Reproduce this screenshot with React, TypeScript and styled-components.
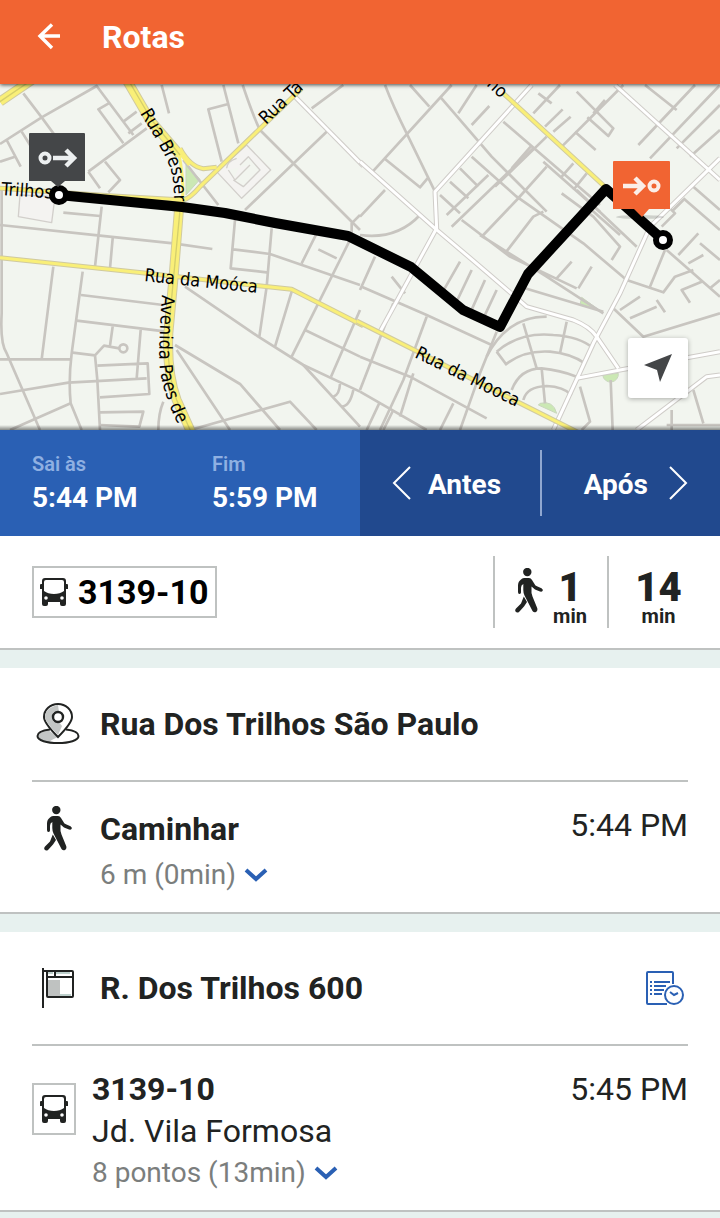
import React from "react";
import styled, { createGlobalStyle } from "styled-components";

const GlobalStyle = createGlobalStyle`
  *, *::before, *::after { box-sizing: border-box; }
  body {
    margin: 0;
    background: #e7f1ef;
    color: #212322;
    font-family: Roboto, "Liberation Sans", sans-serif;
  }
  button { font: inherit; color: inherit; background: none; border: 0; padding: 0; cursor: pointer; }
  h1, h2, h3, p, dl, dt, dd { margin: 0; font-weight: inherit; font-size: inherit; }
  svg { display: block; flex: none; }
`;

const Header = styled.header`
  position: relative;
  z-index: 1;
  display: flex;
  align-items: center;
  gap: 36px;
  height: 84px;
  padding: 0 32px 10px;
  background: #f16432;
  color: #fff;
  box-shadow: 0 1px 4px rgba(0, 0, 0, 0.7);
`;

const BackLink = styled.a`
  display: flex;
  justify-content: center;
  width: 34px;
  color: inherit;
`;

const PageTitle = styled.h1`
  font-size: 32px;
  line-height: 40px;
  font-weight: 700;
`;

const MapArea = styled.section`
  position: relative;
  height: 346px;
  overflow: hidden;
  background: #f2f5ef;
  &::after {
    content: "";
    position: absolute;
    inset: auto 0 0;
    height: 5px;
    background: linear-gradient(transparent, rgba(0, 0, 0, 0.45));
    pointer-events: none;
  }
`;

const MapCanvas = styled.svg`
  width: 100%;
  height: 100%;
`;

const Streets = styled.g`
  fill: none;
  stroke-linejoin: round;
  .minor { stroke: #c8c5c0; stroke-width: 8; }
  .plot { stroke: #d2cfcb; stroke-width: 4; fill: #f4f3f1; }
  .park { fill: #cbe8b4; stroke: #c9d6bd; stroke-width: 3; }
  .case { stroke: #cfccc8; stroke-width: 15; }
  .white { stroke: #fff; stroke-width: 9; }
  .gold { stroke: #d0caa0; stroke-width: 15; }
  .yellow { stroke: #f9ef78; stroke-width: 9; }
  .goldWide { stroke: #d0caa0; stroke-width: 30; }
  .yellowWide { stroke: #f9ef78; stroke-width: 24; }
  .median { stroke: #d5cf6c; stroke-width: 4; }
`;

const StreetNames = styled.g`
  font-family: "DejaVu Sans Condensed", "DejaVu Sans", sans-serif;
  font-size: 18px;
  fill: #000;
`;

const LocateButton = styled.button`
  position: absolute;
  right: 32px;
  bottom: 32px;
  z-index: 1;
  display: grid;
  place-items: center;
  width: 60px;
  height: 60px;
  border-radius: 3px;
  background: #fff;
  box-shadow: 0 1px 5px rgba(0, 0, 0, 0.3);
`;

const ScheduleBar = styled.section`
  display: grid;
  grid-template-columns: 1fr 1fr;
  height: 106px;
  color: #fff;
  font-weight: 700;
`;

const Times = styled.dl`
  display: grid;
  grid-template-columns: 1fr 1fr;
  align-items: center;
  padding-top: 4px;
  background: #2a60b4;
`;

const TimeEntry = styled.div`
  padding-left: 32px;
  dt { font-size: 20px; line-height: 26px; font-weight: 600; color: #8fb0e2; }
  dd { font-size: 28px; line-height: 42px; }
`;

const Shifts = styled.div`
  display: grid;
  grid-template-columns: 1fr 1fr;
  padding: 20px 0;
  background: #21498e;
`;

const ShiftButton = styled.button<{ $end?: boolean }>`
  display: flex;
  align-items: center;
  justify-content: ${(p) => (p.$end ? "flex-end" : "flex-start")};
  gap: ${(p) => (p.$end ? "20px" : "16px")};
  padding: 0 32px;
  font-size: 28px;
  line-height: 32px;
  border-left: ${(p) => (p.$end ? "2px solid #90a7d0" : "0")};
  span { padding-top: 4px; }
`;

const Card = styled.section`
  margin-bottom: 18px;
  padding: 0 32px;
  background: #fff;
  border-bottom: 2px solid #bfc2c1;
`;

const Summary = styled(Card)`
  display: flex;
  align-items: center;
  justify-content: space-between;
  height: 114px;
  padding-right: 0;
`;

const LineBadge = styled.div`
  display: flex;
  align-items: center;
  gap: 10px;
  height: 52px;
  padding: 0 7px 0 6px;
  border: 2px solid #bfc2c1;
  color: #000;
  font-size: 34px;
  line-height: 40px;
  font-weight: 700;
`;

const Stats = styled.div`
  display: grid;
  grid-template-columns: 114px 113px;
`;

const Stat = styled.div<{ $last?: boolean }>`
  display: flex;
  justify-content: center;
  gap: 10px;
  height: 72px;
  padding: 12px ${(p) => (p.$last ? "12px" : "0")} 0 0;
  border-left: 2px solid #bfc2c1;
`;

const Minutes = styled.p`
  display: flex;
  flex-direction: column;
  align-items: center;
  font-size: 20px;
  line-height: 18px;
  font-weight: 700;
  strong { font-size: 40px; line-height: 39px; }
`;

const StopHeader = styled.header`
  display: flex;
  align-items: center;
  gap: 16px;
  height: 114px;
  border-bottom: 2px solid #bfc2c1;
`;

const StopTitle = styled.h2`
  flex: 1;
  font-size: 32px;
  line-height: 40px;
  font-weight: 700;
`;

const IconSlot = styled.div`
  display: flex;
  justify-content: center;
  width: 52px;
`;

const TimetableButton = styled.button`
  padding: 4px;
`;

const Step = styled.div<{ $top: number }>`
  display: flex;
  align-items: flex-start;
  gap: 16px;
  padding: ${(p) => p.$top}px 0 14px;
`;

const StepBody = styled.div`
  flex: 1;
`;

const StepName = styled.h3`
  font-size: 32px;
  line-height: 46px;
  font-weight: 700;
`;

const Destination = styled.p`
  font-size: 32px;
  line-height: 38px;
`;

const Details = styled.button`
  display: flex;
  align-items: center;
  gap: 8px;
  color: #7b7e7d;
  font-size: 28px;
  line-height: 46px;
`;

const StepTime = styled.time<{ $line: number }>`
  font-size: 32px;
  line-height: ${(p) => p.$line}px;
`;

const BusBox = styled.div`
  display: grid;
  place-items: center;
  width: 44px;
  height: 52px;
  margin-top: 17px;
  border: 2px solid #bfc2c1;
`;

const BusIcon = () => (
  <svg width="28" height="28" viewBox="0 0 28 28" aria-hidden="true">
    <path fill="#212322" fillRule="evenodd" d="M5 0H23Q26 0 26 3V6H27Q28 6 28 7V11H26V26Q26 28 24 28H22Q20 28 20 26V24H8V26Q8 28 6 28H4Q2 28 2 26V11H0V7Q0 6 1 6H2V3Q2 0 5 0ZM6 2Q4 2 4 4V13Q8 16 14 16T24 13V4Q24 2 22 2ZM6 18.200A1.800 1.800 0 1 0 6 21.800A1.800 1.800 0 1 0 6 18.200ZM22 18.200A1.800 1.800 0 1 0 22 21.800A1.800 1.800 0 1 0 22 18.200Z" />
  </svg>
);

const WalkIcon = () => (
  <svg width="28" height="45" viewBox="0 0 28 45" aria-hidden="true">
    <circle cx="12.300" cy="4" r="4.200" fill="#212322" />
    <path fill="#212322" d="M9 10H14Q16 10 17 12L19.500 16Q20 17.500 22.500 18.500L26.500 20.200Q28.500 21.500 27.500 23Q26.800 24 25 23.500L20 21.500L16.500 18.500V25L17.500 28.500L22.200 40Q23 43 21 44Q19 45 17.500 43L9.500 27.500Q8.300 25 8.300 22V16Q6 17 6 20V24.500Q5.700 26 4.400 26Q3 26 3 24V17.500Q3 13.500 6 11.500Q7 10 9 10ZM8.800 28.500L12 34L9 38.500L4 44Q2 45.300 .500 43.500Q-.300 42 1 40.500L6 35.500Z" />
  </svg>
);

const PinIcon = () => (
  <svg width="44" height="42" viewBox="0 0 44 42" aria-hidden="true">
    <ellipse cx="22" cy="33" rx="20.5" ry="7" fill="#fff" />
    <path d="M22 34L12 27Q2 29 2 33Q3 38 13 39Q15 37 22 34Z" fill="#c3c6c5" />
    <path d="M14 26.500Q1.500 28 1.500 33C1.500 37.500 11 40 22 40S42.500 37.500 42.500 33Q42.500 28 30 26.500" fill="none" stroke="#212322" strokeWidth="2" />
    <path d="M22 34Q8 20 8 14A14 13 0 0 1 36 14Q36 20 22 34Z" fill="#fff" stroke="#212322" strokeWidth="2" />
    <path d="M22 32Q9 19 9 14Q9 5 22 2L23 9H17V19H23L26 23Z" fill="#c3c6c5" />
    <circle cx="22" cy="14" r="5" fill="#fff" stroke="#212322" strokeWidth="2.400" />
  </svg>
);

const StopIcon = () => (
  <svg width="32" height="40" viewBox="0 0 32 40" fill="none" aria-hidden="true">
    <path d="M6 12H18V28H6Z" fill="#bfc2c1" />
    <path d="M18 26H29V28H18ZM14 4H28V6H14ZM6 4H11V6H6Z" fill="#bdd0cc" />
    <path d="M1 0V40M1 3H30Q31 3 31 4V28Q31 29 30 29H6Q5 29 5 28V3M5 9H31M13 3V9" stroke="#212322" strokeWidth="2" />
  </svg>
);

const TimetableIcon = () => (
  <svg width="38" height="34" viewBox="0 0 38 34" fill="none" stroke="#2a60b4" aria-hidden="true">
    <path d="M27 13V2Q27 1 26 1H2Q1 1 1 2V32Q1 33 2 33H21M4 11H6M8 11H24M4 15H6M8 15H20M4 19H6M8 19H18M4 23H6M8 23H16" strokeWidth="2" />
    <circle cx="28" cy="24" r="9" strokeWidth="2" />
    <path d="M24 21L28 24L32 22" strokeWidth="2" />
  </svg>
);

const ChevronDown = () => (
  <svg width="24" height="16" viewBox="0 0 24 16" fill="none" stroke="#2a60b4" strokeWidth="4" aria-hidden="true">
    <path d="M2 3L12 12L22 3" />
  </svg>
);

const ThinChevron = ({ right }: { right?: boolean }) => (
  <svg width="20" height="34" viewBox="0 0 20 34" fill="none" stroke="#fff" strokeWidth="2" aria-hidden="true">
    <path d={right ? "M2 1L18 17L2 33" : "M18 1L2 17L18 33"} />
  </svg>
);

const minorWest = [
  "M0 192L125 112L290 18L400 165M70 40L125 112L215 235M330 68L295 88L370 190M370 125L410 95M385 160L425 130",
  "M265 275L440 145M265 275L300 325M315 245L360 300L325 337M0 245L45 230M20 180L62 260M65 155L90 195",
  "M485 15L507 100M670 15L715 190M685 72L625 88L665 245M935 85L1030 15M980 155L735 390M780 150L1080 450",
  "M550 240L655 375M190 398L300 408M305 380L285 560M0 435L300 467L520 490L637 507M338 475L330 565",
  "M5 330V700Q0 790 20 820L120 1050M160 560L125 838M0 838H212M248 575L215 820Q205 900 212 970L245 1050",
  "M243 645L490 675M230 722L500 755M338 740L330 797M218 818L285 826L312 797L358 805M285 826L292 900L300 1050",
  "M292 857L443 850L448 942L300 952M422 750L410 895M0 942L205 908L440 895M300 997L430 995L418 1040L300 1035M30 1050L212 970",
  "M555 620L775 770L910 855L1080 935M525 795L720 912L840 1050M530 810L690 1050M570 1050L870 965L950 1050M475 1050Q475 1000 490 965",
  "M705 420L692 565L800 577M700 508L810 522L1080 615M815 445L800 620L778 770M950 460L905 550M955 508L1010 535",
  "M1080 405L1055 430V470L875 830M875 635L825 800M915 750L1080 830M1080 690L993 890M910 855L1080 1040M1020 912Q1018 945 1000 950M1060 930Q1050 978 1025 980M728 15Q760 110 780 150",
];

const minorEast = [
  "M75 15Q100 80 140 160L225 335M150 15L208 80M275 15L38 275M240 50L395 230L560 395M75 237L180 322L205 292",
  "M350 15L295 100M335 135L388 78M430 125L505 190L720 375M455 265L512 200M405 320L560 170M535 40L575 70M600 15L520 100M555 140L608 88M580 155L632 110M600 205L745 60L790 15",
  "M650 35L760 145L745 168L682 112M645 155L707 210M735 60L700 100M855 15L950 90M1005 15L835 195M1080 15L870 235M1080 75L950 205M1080 150L990 230M605 290L640 250M640 330L680 280M550 245L720 395",
  "M335 230L470 350L670 490L800 600M300 265L355 320M270 305L325 355M240 345L300 400M275 440L520 205M260 405L385 285M370 465L470 360L560 260M435 520L520 410L550 395M360 465L560 590L730 700M305 420L450 530L650 625",
  "M605 340L700 410L780 500L755 540M650 330L830 500M590 595L635 545M655 625L695 560M695 390L780 465M480 620L730 695M0 465Q110 480 180 405M0 410L75 330",
  "M5 620L200 705L395 795M45 530L0 630M135 640L95 590M300 545L240 650M335 570L285 675M375 600L330 700M410 630L370 715M200 710L130 900L60 1050M100 670L35 840L0 930M410 755L360 880L300 1050",
  "M0 830L150 890L380 1015M0 935L200 1050M60 965L20 1050M100 990L70 1050M280 970L240 1050M160 880L120 1010",
  "M410 815Q480 755 580 765Q660 770 700 805M435 855Q490 810 570 815Q630 820 675 850M380 830Q440 710 560 710M490 960Q500 920 560 918Q610 920 635 945M455 930Q480 865 545 865Q600 870 650 890M490 730L530 865M620 725L600 820M410 815L440 855M545 865L555 970M660 920L690 1025L665 1050",
  "M800 600L910 637L945 590L1000 570M870 620L915 510M920 510L1080 650M955 525L1015 460M1020 490L1080 540M970 355L1080 450M1000 320L1080 390M940 390L970 360M905 440L945 400L920 375M985 550L1030 525M1025 605L965 630L990 668M755 680L850 770L1080 700M780 690L840 650M810 715L890 680M890 660L915 697",
  "M752 900L758 1050M935 990V1050M1000 930L1030 1030M920 1035H1080M1080 600L1050 625",
];

const whiteEast = [
  "M515 15L225 335L230 445L60 755",
  "M0 245L225 445Q350 550 500 680L640 720Q690 740 710 770L775 865",
  "M765 15L1080 300",
  "M1080 235L870 440L780 640L700 790L580 1050",
  "M650 895L780 870L1080 815",
  "M830 1050L1040 890L1080 885",
];

const yellowWest = [
  "M905 25L600 320Q570 355 550 360L340 348L0 325",
  "M540 205Q570 260 610 266L650 262",
  "M0 533L440 580L875 628L1090 737",
];

const RouteMap = () => (
  <MapCanvas viewBox="0 84 720 346" preserveAspectRatio="xMidYMid slice" role="img" aria-label="Mapa da rota">
    <Streets transform="translate(0 80) scale(.33333)">
      <path className="plot" d="M60 345L55 410L155 428L165 350Z" />
      <path className="plot" d="M740 195L812 270L725 355L650 275ZM680 265Q680 245 710 235M685 270L705 300L750 255M700 300L730 320L780 270L745 230L720 255" />
      <path className="park" d="M558 255L600 298L558 345Z" />
      {minorWest.map((d) => <path key={d} className="minor" d={d} />)}
      <circle className="minor" cx="370" cy="805" r="12" />
      <path className="case" d="M880 45L1090 258" />
      <path className="white" d="M880 45L1090 258" />
      {yellowWest.map((d) => <path key={d} className="gold" d={d} />)}
      <path className="goldWide" d="M0 65L95 0M380 0L450 120L540 225" />
      <path className="goldWide" d="M540 350L520 600L505 760Q500 880 530 960L575 1060" />
      {yellowWest.map((d) => <path key={d} className="yellow" d={d} />)}
      <path className="yellowWide" d="M0 65L95 0M380 0L450 120L540 225" />
      <path className="yellow" d="M535 215L568 255M535 215Q552 290 548 360" />
      <path className="yellowWide" d="M540 350L520 600L505 760Q500 880 530 960L575 1060" />
      <path className="median" d="M0 65L95 0M385 0L455 120L540 225M540 390L520 600L505 760Q500 880 530 960L575 1060" />
    </Streets>
    <Streets transform="translate(360 80) scale(.33333)">
      <path className="park" d="M665 652L720 692L660 675ZM540 970Q580 960 590 1000L535 975ZM728 885A22 22 0 1 0 775 880Z" />
      {minorEast.map((d) => <path key={d} className="minor" d={d} />)}
      {whiteEast.map((d) => <path key={d} className="case" d={d} />)}
      {whiteEast.map((d) => <path key={d} className="white" d={d} />)}
      <path className="gold" d="M430 40L740 325M-10 723L660 1060" />
      <path className="yellow" d="M430 40L740 325M-10 723L660 1060" />
    </Streets>
    <defs>
      <path id="bresser" d="M140 113Q161 146 170 167Q175 180 174 215" />
      <path id="paes" d="M162 295Q158 350 160 370Q164 400 186 440" />
    </defs>
    <StreetNames>
      <text transform="translate(1 195) rotate(4)">Trilhos</text>
      <text><textPath href="#bresser">Rua Bresser</textPath></text>
      <text><textPath href="#paes">Avenida Paes de</textPath></text>
      <text transform="translate(144 281) rotate(6)">Rua da Moóca</text>
      <text transform="translate(266 125) rotate(-44)">Rua Ta</text>
      <text transform="translate(414 357) rotate(26)">Rua da Mooca</text>
      <text transform="translate(486 85) rotate(43)">no</text>
    </StreetNames>
    <path d="M59 195L182 207L225 213L275 223L348 236L411 267L463 310L500 327L528 274L606 189L663 240" fill="none" stroke="#000" strokeWidth="10" strokeLinejoin="round" />
    <circle cx="59" cy="195" r="7" fill="#fff" stroke="#000" strokeWidth="6" />
    <circle cx="663" cy="240" r="7" fill="#fff" stroke="#000" strokeWidth="6" />
    <path d="M30 133H84Q85 133 85 134V181H65L58 187L51 181H29V134Q29 133 30 133Z" fill="#444648" />
    <g fill="none" stroke="#eceff0" strokeWidth="4.500">
      <circle cx="45" cy="158" r="4.500" strokeWidth="4" />
      <path d="M53 158H74M66 150L74 158L66 166" />
    </g>
    <ellipse cx="640" cy="217" rx="24" ry="2" fill="#000" opacity=".15" />
    <path d="M614 161H669Q670 161 670 162V209H649L642 217L634 209H613V162Q613 161 614 161Z" fill="#f16432" />
    <g fill="none" stroke="#fbeee8" strokeWidth="4.500">
      <circle cx="654" cy="186" r="4.500" strokeWidth="4" />
      <path d="M623 186H643M635 178L643 186L635 194" />
    </g>
  </MapCanvas>
);

export default function App() {
  return (
    <>
      <GlobalStyle />
      <Header>
        <BackLink href="#" aria-label="Voltar">
          <svg width="24" height="28" viewBox="0 0 24 28" fill="none" stroke="#fff" strokeWidth="3.400" aria-hidden="true">
            <path d="M15 1.500L3 13L15 25M3 13H23" />
          </svg>
        </BackLink>
        <PageTitle>Rotas</PageTitle>
      </Header>
      <main>
        <MapArea>
          <RouteMap />
          <LocateButton aria-label="Minha localização">
            <svg width="30" height="30" viewBox="0 0 30 30" aria-hidden="true">
              <path d="M29 1L17 29L14 17L1 12Z" fill="#444648" />
            </svg>
          </LocateButton>
        </MapArea>
        <ScheduleBar>
          <Times>
            <TimeEntry><dt>Sai às</dt><dd>5:44 PM</dd></TimeEntry>
            <TimeEntry><dt>Fim</dt><dd>5:59 PM</dd></TimeEntry>
          </Times>
          <Shifts>
            <ShiftButton><ThinChevron /><span>Antes</span></ShiftButton>
            <ShiftButton $end><span>Após</span><ThinChevron right /></ShiftButton>
          </Shifts>
        </ScheduleBar>
        <Summary>
          <LineBadge><BusIcon />3139-10</LineBadge>
          <Stats>
            <Stat><WalkIcon /><Minutes><strong>1</strong>min</Minutes></Stat>
            <Stat $last><Minutes><strong>14</strong>min</Minutes></Stat>
          </Stats>
        </Summary>
        <Card>
          <StopHeader>
            <IconSlot><PinIcon /></IconSlot>
            <StopTitle>Rua Dos Trilhos São Paulo</StopTitle>
          </StopHeader>
          <Step $top={24}>
            <IconSlot><WalkIcon /></IconSlot>
            <StepBody>
              <StepName>Caminhar</StepName>
              <Details aria-expanded="false">6 m (0min)<ChevronDown /></Details>
            </StepBody>
            <StepTime $line={38}>5:44 PM</StepTime>
          </Step>
        </Card>
        <Card>
          <StopHeader>
            <IconSlot><StopIcon /></IconSlot>
            <StopTitle>R. Dos Trilhos 600</StopTitle>
            <TimetableButton aria-label="Ver horários"><TimetableIcon /></TimetableButton>
          </StopHeader>
          <Step $top={20}>
            <BusBox><BusIcon /></BusBox>
            <StepBody>
              <StepName>3139-10</StepName>
              <Destination>Jd. Vila Formosa</Destination>
              <Details aria-expanded="false">8 pontos (13min)<ChevronDown /></Details>
            </StepBody>
            <StepTime $line={46}>5:45 PM</StepTime>
          </Step>
        </Card>
      </main>
    </>
  );
}
